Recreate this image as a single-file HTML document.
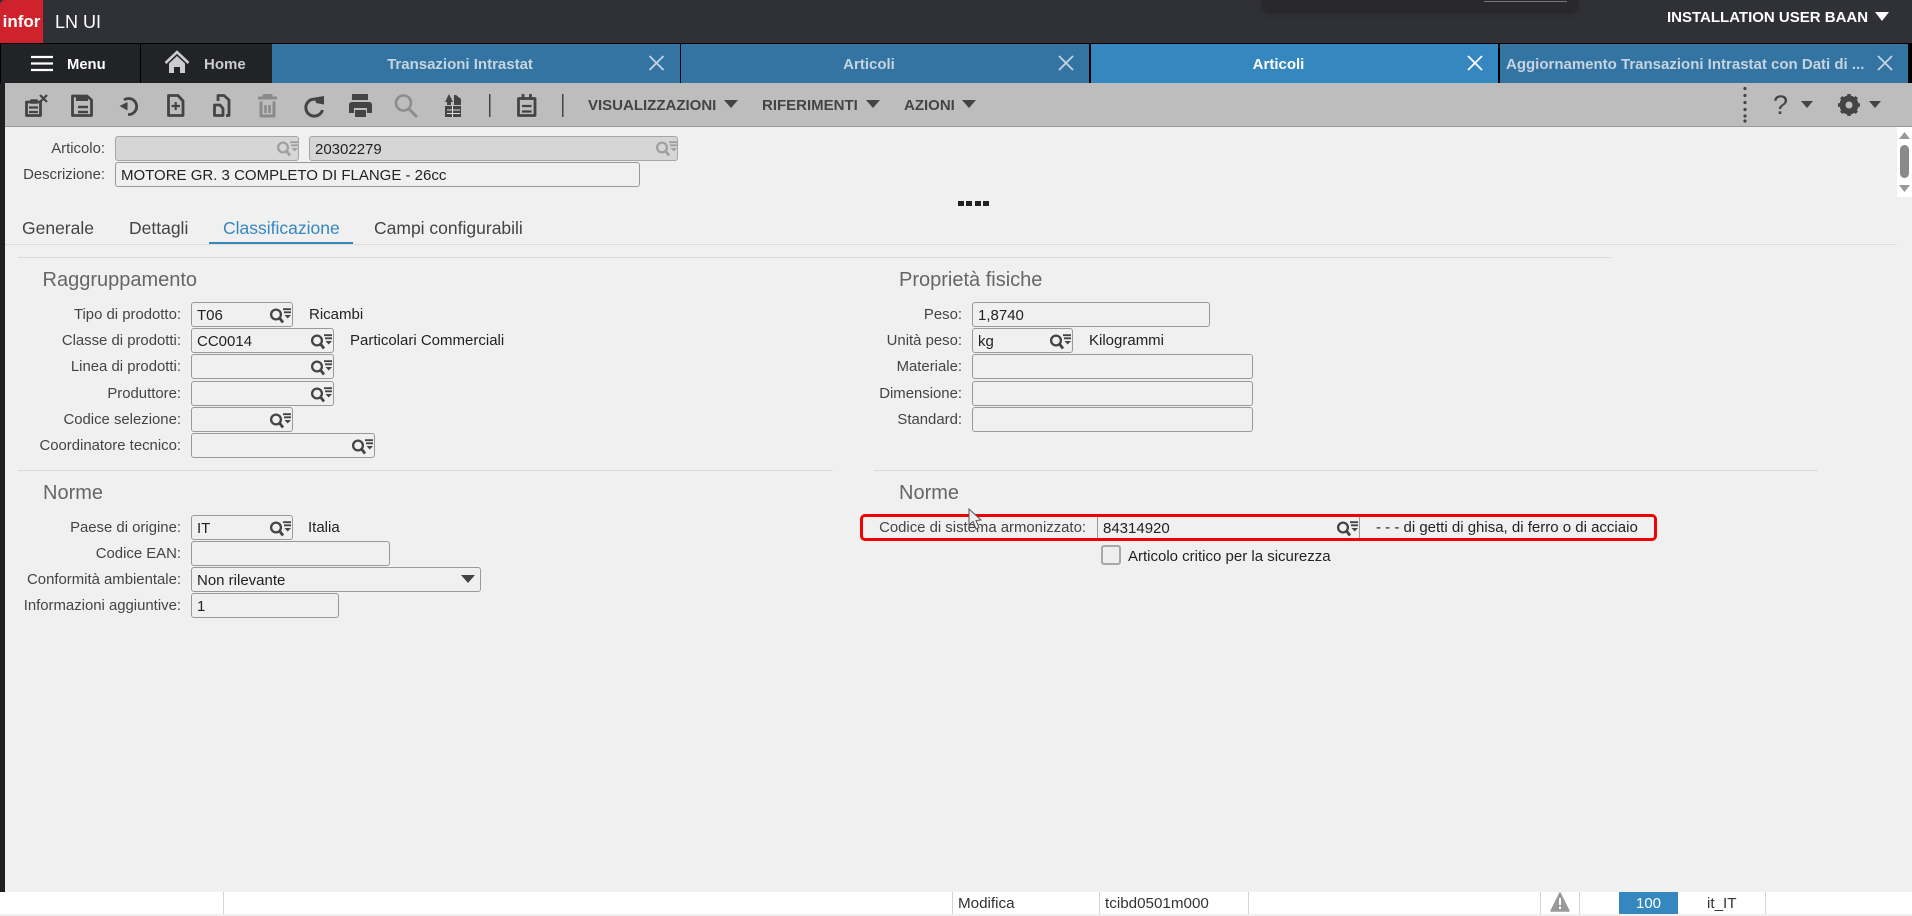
<!DOCTYPE html>
<html><head><meta charset="utf-8"><title>LN UI</title>
<style>
html,body{margin:0;padding:0;width:1912px;height:914px;overflow:hidden;background:#f0f0f0;font-family:"Liberation Sans",Arial,sans-serif}
div,span{position:absolute;box-sizing:border-box;white-space:nowrap}
.tab{top:44px;height:39px;line-height:41px;text-align:center;font-weight:bold;font-size:15px;color:#c6d4df;background:#3374a3;padding-right:32px}
.tb{top:83px;height:43px;line-height:46px;font-weight:bold;font-size:15px;color:#444}
.l{left:0;width:181px;height:25px;line-height:27px;text-align:right;font-size:14.9px;color:#444}
.r{left:0;width:962px;height:25px;line-height:27px;text-align:right;font-size:14.9px;color:#444}
.f{height:25px;border:1px solid #999;border-radius:3px;background:#f0f0f0;font-size:15px;line-height:25px;padding-left:5px;color:#222}
.d{height:25px;line-height:25px;font-size:15px;color:#222}
.h{font-size:20px;color:#666;line-height:24px;height:24px}
.t{top:217px;font-size:17.5px;line-height:22px;color:#444}
.li{height:1px;background:#dcdcdc}
.s{top:892px;height:22px;line-height:24px;font-size:15.2px;color:#333}
.v{top:892px;width:1px;height:22px;background:#d4d4d4}
svg{position:absolute;left:0;top:0;overflow:visible}
</style></head><body>
<!-- top bar -->
<div style="left:0;top:0;width:1912px;height:44px;background:#303136;border-bottom:1px solid #000"></div>
<div style="left:0;top:0;width:43px;height:43px;background:#d0222c;border-top-left-radius:5px;color:#fff;font-weight:bold;font-size:17px;line-height:43px;text-align:center">infor</div>
<div style="left:55px;top:10px;font-size:18px;line-height:24px;color:#fff">LN UI</div>
<div style="left:1262px;top:0;width:316px;height:10px;background:#29292b;border-radius:0 0 5px 5px;box-shadow:0 2px 8px rgba(0,0,0,.35)"></div>
<div style="left:1484px;top:0;width:83px;height:2px;border-bottom:1px solid #777"></div>
<div style="left:1667px;top:8px;font-weight:bold;font-size:15px;line-height:20px;color:#fff">INSTALLATION USER BAAN</div>
<!-- tabs -->
<div style="left:0;top:44px;width:1912px;height:39px;background:#000"></div>
<div style="left:1px;top:44px;width:139px;height:39px;background:#212326"></div>
<div style="left:67px;top:44px;height:39px;line-height:42px;font-weight:bold;font-size:14.8px;color:#fff">Menu</div>
<div style="left:141px;top:44px;width:131px;height:39px;background:#212326"></div>
<div style="left:204px;top:44px;height:39px;line-height:41px;font-weight:bold;font-size:15px;color:#ccc">Home</div>
<div class="tab" style="left:272px;width:408px">Transazioni Intrastat</div>
<div class="tab" style="left:681px;width:408px">Articoli</div>
<div class="tab" style="left:1091px;width:407px;background:#3587c0;color:#fff">Articoli</div>
<div class="tab" style="left:1500px;width:408px;text-align:left;padding-left:6px;padding-right:0">Aggiornamento Transazioni Intrastat con Dati di ...</div>
<!-- toolbar -->
<div style="left:0;top:83px;width:5px;height:809px;background:#1f2023"></div>
<div style="left:5px;top:83px;width:1907px;height:44px;background:#bdbdbd;border-bottom:1px solid #999"></div>
<div class="tb" style="left:588px">VISUALIZZAZIONI</div>
<div class="tb" style="left:762px">RIFERIMENTI</div>
<div class="tb" style="left:904px">AZIONI</div>
<div style="left:1773px;top:90px;font-size:27px;line-height:30px;color:#444">?</div>
<!-- scrollbar -->
<div style="left:1897px;top:127px;width:15px;height:70px;background:#fff"></div>
<div style="left:1900px;top:145px;width:9px;height:33px;background:#8a8a8a;border-radius:5px"></div>
<!-- header fields -->
<div class="l" style="top:136px;width:105px">Articolo:</div>
<div class="f" style="left:115px;top:136px;width:184px;background:#d6d6d6;border-color:#a6a6a6"></div>
<div class="f" style="left:309px;top:136px;width:369px;background:#d6d6d6;border-color:#a6a6a6">20302279</div>
<div class="l" style="top:162px;width:105px">Descrizione:</div>
<div class="f" style="left:115px;top:162px;width:525px">MOTORE GR. 3 COMPLETO DI FLANGE - 26cc</div>
<!-- tabs -->
<div class="t" style="left:22px">Generale</div>
<div class="t" style="left:129px">Dettagli</div>
<div class="t" style="left:223px;color:#3587c0">Classificazione</div>
<div class="t" style="left:374px">Campi configurabili</div>
<div class="li" style="left:5px;top:244px;width:1892px"></div>
<div style="left:209px;top:242px;width:144px;height:2px;background:#3587c0"></div>
<div class="li" style="left:18px;top:257px;width:1594px"></div>
<!-- Raggruppamento -->
<div class="h" style="left:42.500px;top:268px">Raggruppamento</div>
<div class="l" style="top:302px">Tipo di prodotto:</div>
<div class="f" style="left:191px;top:302px;width:102px">T06</div>
<div class="d" style="left:309px;top:302px">Ricambi</div>
<div class="l" style="top:328px">Classe di prodotti:</div>
<div class="f" style="left:191px;top:328px;width:143px">CC0014</div>
<div class="d" style="left:350px;top:328px">Particolari Commerciali</div>
<div class="l" style="top:354px">Linea di prodotti:</div>
<div class="f" style="left:191px;top:354px;width:143px"></div>
<div class="l" style="top:381px">Produttore:</div>
<div class="f" style="left:191px;top:381px;width:143px"></div>
<div class="l" style="top:407px">Codice selezione:</div>
<div class="f" style="left:191px;top:407px;width:102px"></div>
<div class="l" style="top:433px">Coordinatore tecnico:</div>
<div class="f" style="left:191px;top:433px;width:184px"></div>
<!-- Proprieta -->
<div class="h" style="left:899px;top:268px">Proprietà fisiche</div>
<div class="r" style="top:302px">Peso:</div>
<div class="f" style="left:972px;top:302px;width:238px">1,8740</div>
<div class="r" style="top:328px">Unità peso:</div>
<div class="f" style="left:972px;top:328px;width:101px">kg</div>
<div class="d" style="left:1089px;top:328px">Kilogrammi</div>
<div class="r" style="top:354px">Materiale:</div>
<div class="f" style="left:972px;top:354px;width:281px"></div>
<div class="r" style="top:381px">Dimensione:</div>
<div class="f" style="left:972px;top:381px;width:281px"></div>
<div class="r" style="top:407px">Standard:</div>
<div class="f" style="left:972px;top:407px;width:281px"></div>
<div class="li" style="left:18px;top:470px;width:815px"></div>
<div class="li" style="left:874px;top:470px;width:944px"></div>
<!-- Norme left -->
<div class="h" style="left:43px;top:481px">Norme</div>
<div class="l" style="top:515px">Paese di origine:</div>
<div class="f" style="left:191px;top:515px;width:102px">IT</div>
<div class="d" style="left:308px;top:515px">Italia</div>
<div class="l" style="top:541px">Codice EAN:</div>
<div class="f" style="left:191px;top:541px;width:199px"></div>
<div class="l" style="top:567px">Conformità ambientale:</div>
<div class="f" style="left:191px;top:567px;width:290px">Non rilevante</div>
<div class="l" style="top:593px">Informazioni aggiuntive:</div>
<div class="f" style="left:191px;top:593px;width:148px">1</div>
<!-- Norme right -->
<div class="h" style="left:899px;top:481px">Norme</div>
<div style="left:0;top:515px;width:1086px;height:25px;line-height:27px;text-align:right;font-size:14.9px;color:#444">Codice di sistema armonizzato:</div>
<div style="left:1097px;top:516px;width:263px;height:24px;border-left:1px solid #999;border-right:1px solid #999;font-size:15px;line-height:25px;padding-left:5px;color:#222">84314920</div>
<div class="d" style="left:1376px;top:515px;line-height:25px">- - - di getti di ghisa, di ferro o di acciaio</div>
<div style="left:860px;top:514px;width:797px;height:27px;border:3px solid #f00000;border-radius:5px"></div>
<div style="left:1101px;top:545px;width:20px;height:20px;border:2px solid #a8a8a8;border-radius:3px;background:#eee"></div>
<div class="d" style="left:1128px;top:543px;line-height:27px">Articolo critico per la sicurezza</div>
<!-- status -->
<div style="left:0;top:892px;width:1912px;height:22px;background:#fff"></div>
<div class="v" style="left:223px"></div><div class="v" style="left:952px"></div><div class="v" style="left:1099px"></div><div class="v" style="left:1248px"></div><div class="v" style="left:1540px"></div><div class="v" style="left:1579px"></div><div class="v" style="left:1765px"></div>
<div class="s" style="left:958px">Modifica</div>
<div class="s" style="left:1105px">tcibd0501m000</div>
<div style="left:1619px;top:892px;width:59px;height:22px;line-height:24px;text-align:center;font-size:15px;color:#fff;background:#3587c0">100</div>
<div class="s" style="left:1707px">it_IT</div>

<svg width="1912" height="914" viewBox="0 0 1912 914">
<defs>
<g id="q" fill="none">
<circle cx="6" cy="6.500" r="4.900" stroke-width="2.300"/>
<path d="M9.500 10L13 14.500" stroke-width="2.800"/>
<path d="M13 1.200H21M14 4.300H21" stroke-width="1.800"/>
<path d="M14.500 7H21L17.700 10.500Z" stroke="none" fill="currentColor"/>
</g>
<path id="x" d="M-7 -7L7 7M7 -7L-7 7" fill="none" stroke-width="1.800"/>
</defs>
<!-- tab icons -->
<path d="M31 57H53M31 63.500H53M31 70H53" stroke="#fff" stroke-width="2.200"/>
<path d="M165.500 63L177 52L188.500 63" fill="none" stroke="#ccc" stroke-width="2.600"/>
<path d="M169 63.500L177 56L185 63.500V73H180V67H174V73H169Z" fill="#ccc"/>
<g stroke="#c6d4df"><use href="#x" x="656.500" y="63"/><use href="#x" x="1066" y="63"/><use href="#x" x="1885" y="63"/></g>
<use href="#x" x="1475" y="63" stroke="#fff"/>
<path d="M1875 12H1889L1882 21Z" fill="#fff"/>
<!-- toolbar icons -->
<g fill="none" stroke="#444" stroke-width="2.800" stroke-linejoin="round">
<path d="M26.500 102H40.500V115.500H26.500Z"/><path d="M31 100H37V103H31Z" fill="#444" stroke-width="1.500"/><path d="M29 107.500H38M29 112H38" stroke-width="2.200"/>
<path d="M40 95L47 102M47 95L40 102" stroke-width="2.200"/>
<path d="M72.500 96H87L91.500 100V115.500H72.500Z"/><path d="M76 95H88V101H76Z" fill="#444" stroke="none"/><path d="M78 107H88M78 112H88" stroke-width="2.500"/>
<path d="M124 100A8 8 0 1 1 128 114.500"/><path d="M119.500 106L127.500 102V110.500Z" fill="#444" stroke="none"/>
<path d="M168.500 95.500H178L183 101V115.500H168.500Z"/><path d="M171.500 106H180M175.700 102V110" stroke-width="2.200"/>
<path d="M214.500 105V115.500H223V108.500L220 105ZM218 101V95.500H224L229 100V115.500H226"/>
<path d="M258 98H277M264 98V95.500H271V98M261 101.500V116H274V101.500" stroke="#8a8a8a" stroke-width="3"/><path d="M265.500 105V113M269.500 105V113" stroke="#8a8a8a" stroke-width="2.500"/>
<path d="M319 100.500A8.500 8.500 0 1 0 322.500 110" stroke-width="3"/><path d="M315 97.500L324 96V104.500L316 103Z" fill="#444" stroke="none"/>
<circle cx="403.500" cy="103" r="7.500" stroke="#8d8d8d" stroke-width="2.600"/><path d="M409 109L417 117" stroke="#8d8d8d" stroke-width="3"/>
<path d="M518.500 98.500H535V115.500H518.500ZM523 94V100M530.500 94V100"/><path d="M522 106H531.500M522 111.500H531.500" stroke-width="2.200"/>
</g>
<g fill="#444">
<path d="M349 105Q349 102 352 102H369Q372 102 372 105V113H367V108H354V113H349Z"/><path d="M352 94H368V100H352ZM355 110H366V117H355Z"/>
<path d="M445 106H461V117H445Z"/><path d="M445 102L449 94L453 102H451V105H447V102ZM454 95H456L461 99V105H454Z"/>
<path d="M489 94h1.500v23H489ZM562 94h1.500v23H562Z"/>
<path d="M724 100H738L731 108ZM866 100H880L873 108ZM962 100H976L969 108ZM1801 101H1813L1807 108ZM1869 101H1881L1875 108Z"/>
<circle cx="1745" cy="88.500" r="1.600"/><circle cx="1745" cy="95.500" r="1.600"/><circle cx="1745" cy="102.500" r="1.600"/><circle cx="1745" cy="109.500" r="1.600"/><circle cx="1745" cy="116" r="1.600"/><circle cx="1745" cy="121" r="1.600"/>
</g>
<path d="M447 110H460M447 113.500H460M452.500 106V117" stroke="#ddd" stroke-width="1"/>
<circle cx="1849" cy="105" r="7" fill="none" stroke="#444" stroke-width="5"/>
<path d="M1849 94V116M1838 105H1860M1841.200 97.200L1856.800 112.800M1856.800 97.200L1841.200 112.800" stroke="#444" stroke-width="3.500"/>
<circle cx="1849" cy="105" r="3.500" fill="#bdbdbd"/>
<path d="M1899 139L1904.500 132L1910 139ZM1899 185H1910L1904.500 192Z" fill="#999"/>
<!-- dots -->
<path d="M958 201h6v5h-6zM966 201h6v5h-6zM975 201h6v5h-6zM983 201h6v5h-6z" fill="#222"/>
<!-- lookups -->
<g stroke="#a0a0a0" color="#a0a0a0"><use href="#q" x="277" y="141"/><use href="#q" x="656" y="141"/></g>
<g stroke="#444" color="#444">
<use href="#q" x="270" y="308"/><use href="#q" x="311" y="334"/><use href="#q" x="311" y="360"/><use href="#q" x="311" y="387"/><use href="#q" x="270" y="413"/><use href="#q" x="352" y="439"/>
<use href="#q" x="1050" y="334"/>
<use href="#q" x="270" y="521"/>
<use href="#q" x="1337" y="521"/>
</g>
<path d="M461 575H475L468 583Z" fill="#444"/>
<!-- cursor -->
<path d="M969 509V525L973 521.500L976 529L979 527.500L976 520.500L981 520Z" fill="#f0f0f0" stroke="#555" stroke-width="1"/>
<!-- warning -->
<path d="M1560 893L1569 911H1551Z" fill="#999" stroke="#999" stroke-linejoin="round" stroke-width="1.500"/>
<path d="M1560 898V905M1560 906.500V909" stroke="#fff" stroke-width="2"/>
</svg>
</body></html>
